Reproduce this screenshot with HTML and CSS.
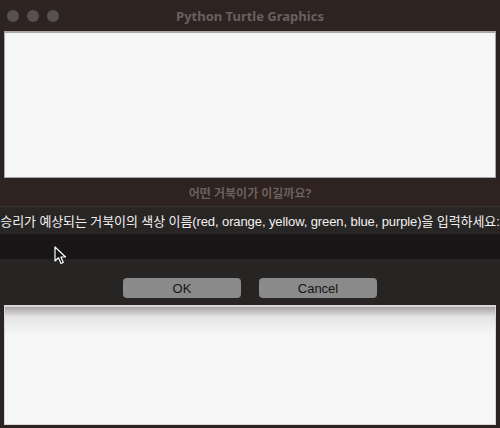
FILE: index.html
```html
<!DOCTYPE html>
<html lang="ko">
  <head>
    <meta charset="UTF-8" />
    <title>Python Turtle Graphics</title>
    <link rel="stylesheet" href="styles.css">
  </head>
  <body>
    <div class="window">
      <div class="titlebar">
        <div class="lights">
          <span></span>
          <span></span>
          <span></span>
        </div>
        <p class="title">Python Turtle Graphics</p>
      </div>
      <div class="canvas top"></div>

      <div class="dialog">
        <div class="dialog-title">어떤 거북이가 이길까요?</div>
        <div class="prompt">
          <p>승리가 예상되는 거북이의 색상 이름(red, orange, yellow, green, blue, purple)을 입력하세요:</p>
        </div>
        <div class="entry"></div>
        <div class="buttons">
          <button class="btn">OK</button>
          <button class="btn">Cancel</button>
        </div>
      </div>

      <div class="canvas bottom"></div>
    </div>

    <svg class="cursor" width="14" height="20" viewBox="0 0 14 20">
      <path d="M1 1 L1 15 L4.5 11.8 L7 17.5 L9.3 16.5 L6.9 11 L11.5 11 Z" fill="#111" stroke="#fff" stroke-width="1.2" stroke-linejoin="round" />
    </svg>
  </body>
</html>
```

FILE: styles.css
```css
* {
  margin: 0;
  padding: 0;
  box-sizing: border-box;
}
body {
  width: 500px;
  height: 428px;
  overflow: hidden;
  background-color: #2a2323;
  font-family: "Noto Sans", "Noto Sans CJK KR", sans-serif;
  position: relative;
}

.window {
  display: flex;
  flex-direction: column;
  height: 428px;
}

.titlebar {
  height: 31px;
  background-color: #2d2321;
  display: flex;
  align-items: center;
  position: relative;
}
.lights {
  display: flex;
  gap: 8px;
  padding-left: 7px;
}
.lights span {
  width: 12px;
  height: 12px;
  border-radius: 50%;
  background-color: #575050;
}
.title {
  position: absolute;
  left: 0;
  right: 0;
  text-align: center;
  font-size: 13px;
  font-weight: bold;
  color: #686060;
}

.canvas {
  margin: 0 4px;
  background-color: #f7f6f7;
  border: 1px solid #a8a6a6;
  border-top-width: 2px;
}
.canvas.top {
  height: 147px;
}
.canvas.bottom {
  margin-top: 3px;
  height: 120px;
  background: linear-gradient(#a6a4a4, #e6e5e5 10px, #f7f6f7 28px);
  border-color: #d8d6d6;
}

.dialog {
  margin-top: 2px;
  height: 122px;
  display: flex;
  flex-direction: column;
  background-color: #272424;
}
.dialog-title {
  height: 27px;
  background-color: #2e231f;
  border-bottom: 1px solid #3a3230;
  text-align: center;
  line-height: 27px;
  font-size: 12px;
  font-weight: bold;
  color: #6a605d;
}
.prompt {
  height: 27px;
  display: flex;
  justify-content: center;
  align-items: center;
  background-color: #282525;
}
.prompt p {
  white-space: nowrap;
  font-family: "Liberation Sans", "Noto Sans CJK KR", sans-serif;
  font-size: 13px;
  letter-spacing: -0.1px;
  color: #f2f0f0;
}
.entry {
  height: 25px;
  background-color: #181616;
}
.buttons {
  flex: 1;
  display: flex;
  justify-content: center;
  gap: 18px;
  padding-top: 19px;
}
.btn {
  width: 118px;
  height: 20px;
  border: none;
  border-radius: 4px;
  background-color: #8b8a8b;
  color: #151515;
  font-family: "Liberation Sans", sans-serif;
  font-size: 13px;
}

.cursor {
  position: absolute;
  left: 54px;
  top: 246px;
}
```
